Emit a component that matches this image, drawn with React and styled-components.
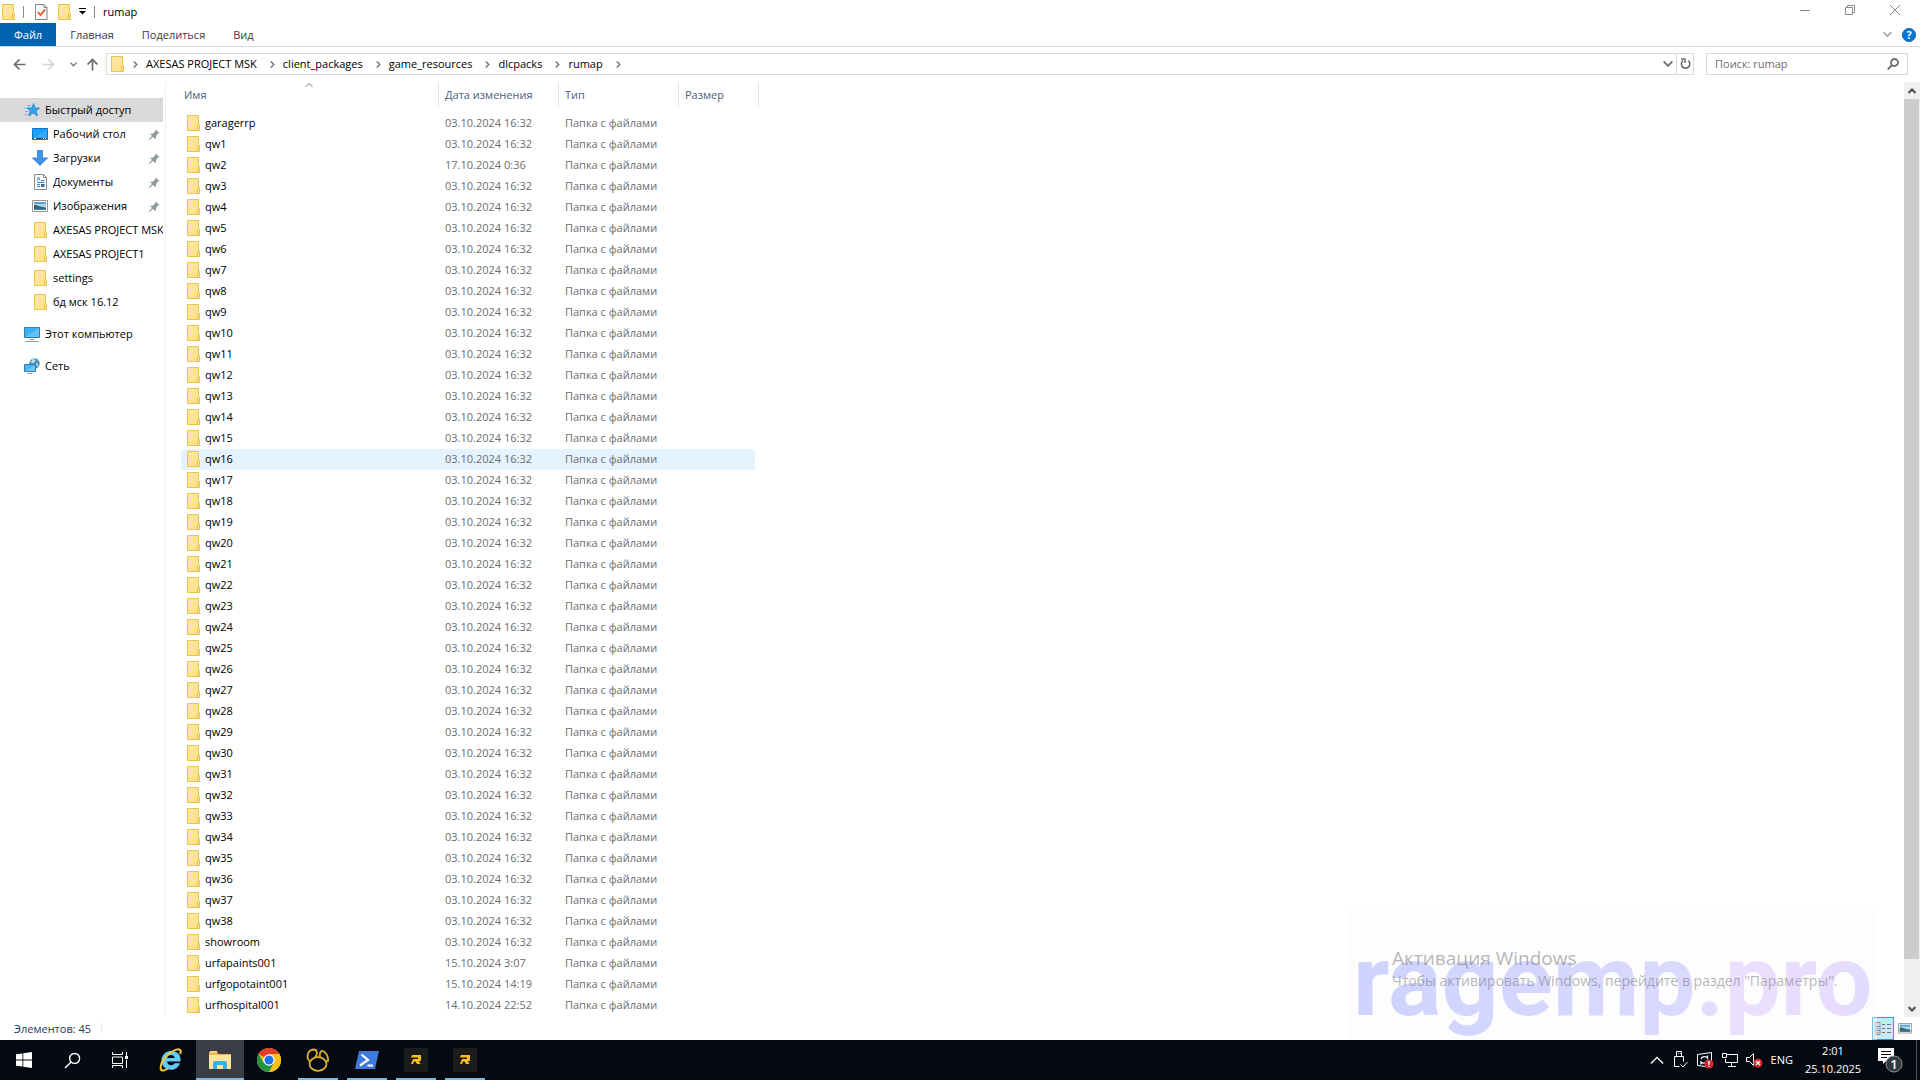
import React from "react";
import styled, { createGlobalStyle, css } from "styled-components";

const GlobalStyle = createGlobalStyle`
  *, *::before, *::after { box-sizing: border-box; }
  body { margin: 0; overflow: hidden; background: #fff; }
  body, button, input, table { font-family: "Open Sans", "Noto Sans", sans-serif; font-size: 11px; line-height: 16px; color: #000; }
  button { padding: 0; border: 0; background: none; }
  svg { display: block; flex: none; }
`;

const Desktop = styled.div`
  display: flex;
  flex-direction: column;
  height: 100vh;
`;

const TitleBar = styled.header`
  display: flex;
  justify-content: space-between;
  height: 23px;
  padding: 0 20px 0 2px;
`;

const QuickTools = styled.div`
  display: flex;
  align-items: center;
  gap: 8px;
`;

const Divider = styled.span`
  width: 1px;
  height: 12px;
  background: #8a8a8a;
`;

const ToolButton = styled.button`
  display: flex;
  align-items: center;
  justify-content: center;
  width: ${(p) => p.$width || 13}px;
  height: 20px;
`;

const Title = styled.h1`
  margin: 0;
  font-size: 11px;
  font-weight: 400;
`;

const WindowButtons = styled.div`
  display: flex;
  align-items: center;
  gap: 35px;
  height: 20px;
`;

const Ribbon = styled.nav`
  display: flex;
  height: 24px;
  padding-right: 4px;
  border-bottom: 1px solid #dadbdc;
`;

const Tab = styled.button`
  height: 23px;
  padding: 0 14px;
  color: ${(p) => (p.$active ? "#fff" : "#3b3b3b")};
  background: ${(p) => (p.$active ? "#0063b1" : "transparent")};
`;

const RibbonTools = styled.div`
  display: flex;
  align-items: center;
  gap: 10px;
  margin-left: auto;
`;

const AddressRow = styled.div`
  display: flex;
  align-items: center;
  gap: 12px;
  padding: 6px 12px 7px;
`;

const NavButtons = styled.div`
  display: flex;
  align-items: center;
  gap: 9px;
`;

const frame = css`
  display: flex;
  align-items: center;
  height: 22px;
  border: 1px solid #d9d9d9;
`;

const AddressBox = styled.div`
  ${frame}
  flex: 1;
  padding-left: 4px;
  margin-left: -5px;
`;

const Crumb = styled.button`
  display: flex;
  align-items: center;
  gap: 12px;
  padding-left: ${(p) => (p.$root ? 8 : 7)}px;
  white-space: nowrap;
`;

const AddressTools = styled.div`
  display: flex;
  align-items: center;
  gap: 3px;
  margin-left: auto;
`;

const Refresh = styled.button`
  display: flex;
  align-items: center;
  justify-content: center;
  width: 17px;
  height: 20px;
  border-left: 1px solid #d9d9d9;
`;

const SearchBox = styled.label`
  ${frame}
  width: 202px;
  padding: 0 8px;
`;

const SearchInput = styled.input`
  flex: 1;
  min-width: 0;
  padding: 0;
  border: 0;
  outline: 0;
  background: none;
  &::placeholder { color: #6d6d6d; opacity: 1; }
`;

const Body = styled.div`
  display: flex;
  flex: 1;
  min-height: 0;
`;

const Sidebar = styled.nav`
  width: 166px;
  padding: 16px 2px 0 0;
  border-right: 1px solid #f3f3f3;
`;

const SideLink = styled.a`
  display: flex;
  align-items: center;
  gap: 5px;
  height: 24px;
  padding-left: ${(p) => (p.$top ? 24 : 32)}px;
  margin-top: ${(p) => (p.$spaced ? 8 : 0)}px;
  color: #000;
  text-decoration: none;
  white-space: nowrap;
  overflow: hidden;
  background: ${(p) => (p.$active ? "#d9d9d9" : "transparent")};
`;

const IconCell = styled.span`
  display: flex;
  justify-content: center;
  flex: none;
  width: 16px;
`;

const PinSlot = styled.span`
  margin: 0 3px 0 auto;
`;

const Main = styled.main`
  flex: 1;
  min-width: 0;
  padding-left: 15px;
  overflow: hidden;
`;

const FileTable = styled.table`
  width: 578px;
  table-layout: fixed;
  border-collapse: separate;
  border-spacing: 0;
`;

const HeadCell = styled.th`
  width: ${(p) => p.$width}px;
  height: 25px;
  padding: 0 0 0 ${(p) => (p.$first ? 3 : 6)}px;
  border-right: 1px solid #e5e5e5;
  color: #4c607a;
  font-weight: 400;
  text-align: left;
  position: relative;
`;

const SortMark = styled.span`
  position: absolute;
  top: -1px;
  left: 50%;
  margin-left: -5px;
`;

const HeadGap = styled.tbody`
  height: 6px;
`;

const Row = styled.tr`
  height: 21px;
  background: ${(p) => (p.$hover ? "linear-gradient(#e5f3ff, #e5f3ff) 0 0 / 574px 100% no-repeat" : "transparent")};
`;

const Cell = styled.td`
  height: 21px;
  padding: 0 0 1px 6px;
  color: #6d6d6d;
  white-space: nowrap;
`;

const FileName = styled.span`
  display: flex;
  align-items: center;
  gap: 5px;
  color: #000;
`;

const ScrollTrack = styled.div`
  display: flex;
  flex-direction: column;
  align-items: center;
  width: 16px;
  background: #f0f0f0;
`;

const ScrollButton = styled.button`
  display: flex;
  align-items: center;
  justify-content: center;
  width: 15px;
  height: 17px;
`;

const ScrollRail = styled.div`
  flex: 1;
  align-self: stretch;
  padding-right: 1px;
`;

const ScrollThumb = styled.div`
  height: 95.5%;
  background: #cdcdcd;
`;

const StatusBar = styled.footer`
  display: flex;
  align-items: center;
  height: 23px;
  padding: 0 4px 0 14px;
  color: #1e395b;
`;

const StatusDivider = styled.span`
  width: 1px;
  height: 11px;
  margin-left: 10px;
  background: #e8e8e8;
`;

const ViewButtons = styled.div`
  display: flex;
  margin-left: auto;
`;

const ViewButton = styled.button`
  display: flex;
  align-items: center;
  justify-content: center;
  width: 22px;
  height: 23px;
  border: 1px solid ${(p) => (p.$active ? "#26a0da" : "transparent")};
  background: ${(p) => (p.$active ? "#cbe8f6" : "transparent")};
`;

const Taskbar = styled.nav`
  display: flex;
  height: 40px;
  flex: none;
  background: #050a12;
`;

const SystemButton = styled.button`
  display: flex;
  align-items: center;
  justify-content: center;
  width: 48px;
  height: 40px;
`;

const Apps = styled.div`
  display: flex;
  gap: 1px;
  margin-left: 3px;
`;

const AppButton = styled.button`
  position: relative;
  display: flex;
  align-items: center;
  justify-content: center;
  width: 48px;
  height: 40px;
  background: ${(p) => (p.$active ? "#3a3d43" : "transparent")};
  &::after {
    content: "";
    position: absolute;
    bottom: 0;
    left: ${(p) => (p.$active ? 0 : 4)}px;
    right: ${(p) => (p.$active ? 0 : 4)}px;
    height: 2px;
    background: ${(p) => (p.$open ? "#76b9ed" : "transparent")};
  }
`;

const Tray = styled.div`
  display: flex;
  align-items: center;
  gap: 8px;
  margin-left: auto;
  padding-right: 3px;
  color: #fff;
`;

const TrayButton = styled.button`
  display: flex;
  align-items: center;
  justify-content: center;
  min-width: 16px;
  height: 40px;
  color: #fff;
`;

const Clock = styled.time`
  display: flex;
  flex-direction: column;
  align-items: center;
  width: 64px;
  line-height: 18px;
`;

const Notifications = styled(TrayButton)`
  width: 35px;
`;

const ShowDesktop = styled.span`
  width: 1px;
  height: 40px;
  background: #4c5057;
`;

const Watermark = styled.div`
  position: absolute;
  right: 43px;
  bottom: 40px;
  width: 528px;
  height: 133px;
  background: rgba(251, 251, 253, 0.4);
  pointer-events: none;
`;

const Brand = styled.div`
  position: absolute;
  left: 4px;
  top: 18px;
  font: 700 100px/112px Roboto, sans-serif;
  color: transparent;
  background: linear-gradient(90deg, #cdd3ff, #dbd9ff 65%, #ebe0ff 72%, #e3dbff);
  background-clip: text;
  white-space: nowrap;
`;

const Activation = styled.div`
  position: absolute;
  left: 43px;
  top: 38px;
  color: rgba(110, 110, 110, 0.5);
  font-size: 14px;
  line-height: 20px;
  white-space: nowrap;
`;

const ActivationTitle = styled.div`
  font-size: 19px;
  line-height: 26px;
`;

const Folder = () => (
  <svg width="13" height="16" viewBox="0 0 13 16">
    <defs>
      <linearGradient id="folderFill" x1="0" y1="0" x2="1" y2="1">
        <stop offset="0" stopColor="#ffe9a2" />
        <stop offset="1" stopColor="#fddf84" />
      </linearGradient>
    </defs>
    <path d="M.5.5h11v9h1v6H.5z" fill="url(#folderFill)" stroke="#e9c54e" />
    <path d="M10.5 15V10.500l1-1" fill="none" stroke="#e9c54e" />
  </svg>
);

const Chevron = ({ dir = "right", color = "#777", size = 7, weight = 1.6 }) => {
  const turn = { right: 0, down: 90, up: -90 }[dir];
  return (
    <svg width={size} height={size} viewBox="0 0 8 8">
      <path d="M2 .5 5.500 4 2 7.500" transform={`rotate(${turn} 4 4)`} fill="none" stroke={color} strokeWidth={weight} />
    </svg>
  );
};

const Arrow = ({ turn = 0, color = "#6b6b6b" }) => (
  <svg width="13" height="13" viewBox="0 0 13 13">
    <path d="M12.500 6.500H1.500M6.500 1.500l-5 5 5 5" transform={`rotate(${turn} 6.500 6.500)`} fill="none" stroke={color} strokeWidth="1.7" />
  </svg>
);

const Properties = () => (
  <svg width="13" height="16" viewBox="0 0 13 16">
    <path d="M.5.5h8.500l3 3v12H.5z" fill="#fafafa" stroke="#858585" />
    <path d="M9 .5v3h3" fill="none" stroke="#858585" />
    <path d="m3 8 2.500 3L10 5.500" fill="none" stroke="#e8591c" strokeWidth="1.8" />
  </svg>
);

const Star = () => (
  <svg width="16" height="16" viewBox="0 0 16 16">
    <path d="m9.500 1.500 1.500 4.500h4.500l-3.500 3 1.500 5-4.500-3-4.200 3 1.500-5L3 6h5z" fill="#35a5ee" stroke="#1a80cd" strokeWidth=".8" />
    <path d="M3 3.500h4M.5 6H4M1 9.500h3.500M.5 12.500h3" stroke="#60b9ef" />
  </svg>
);

const DesktopIcon = () => (
  <svg width="16" height="12" viewBox="0 0 16 12">
    <path d="M.5.5h15v11H.5z" fill="#18a0fb" stroke="#0878c8" />
    <path d="M1 10 15 1v9z" fill="#3bb2ff" opacity=".6" />
    <path d="M1 10.500h14" stroke="#09568f" />
    <path d="M2 10.500h2M11 10.500h1M13 10.500h1" stroke="#fff" />
  </svg>
);

const Download = () => (
  <svg width="16" height="16" viewBox="0 0 16 16">
    <path d="M5.500.5h5V8h5L8 15.500.5 8h5z" fill="#3b96e8" stroke="#2b7fcf" strokeWidth=".8" />
  </svg>
);

const DocumentIcon = () => (
  <svg width="13" height="16" viewBox="0 0 13 16">
    <path d="M.5.5h9l3 3v12H.5z" fill="#fff" stroke="#8b8b8b" />
    <path d="M9.500.5v3h3" fill="none" stroke="#8b8b8b" />
    <path d="M3 6.500 4.500 3 6 6.500M7 6.500h3.500M3 8.500h7.500M3 10.500h3M3 12.500h3" fill="none" stroke="#3388c8" />
    <path d="M7 10h3.500v3H7z" fill="#326d9e" />
  </svg>
);

const Picture = ({ width = 16 }) => (
  <svg width={width} height={width * 0.75} viewBox="0 0 16 12">
    <path d="M.5.5h15v11H.5z" fill="#fff" stroke="#929292" />
    <path d="M2 2h12v8H2z" fill="#a9d4f6" />
    <path d="M2 2h12v2H2z" fill="#5c9ed8" />
    <path d="M2 5.500C4 4 6 7 14 7.500V10H2z" fill="#33665d" />
    <path d="M2 8.500h12V10H2z" fill="#3c78a5" />
  </svg>
);

const Pin = () => (
  <svg width="11" height="11" viewBox="0 0 11 11">
    <path d="M6.500.5 10.500 4l-1.300.4L7 7v2L6 10 1.500 5.300 2.300 4.500h1.800L6.300 2z" fill="#8b9aa5" />
    <path d="M4 7 .5 10.500" stroke="#8b9aa5" strokeWidth="1.300" />
  </svg>
);

const Computer = () => (
  <svg width="16" height="15" viewBox="0 0 16 15">
    <path d="M.5.5h15v10H.5z" fill="#39aff6" stroke="#3c7ca9" />
    <path d="M1 10 15 1v9z" fill="#8ed4fc" opacity=".5" />
    <path d="M6 12.500h4M1 14.500h14" stroke="#8ea3b2" />
  </svg>
);

const Network = () => (
  <svg width="16" height="16" viewBox="0 0 16 16">
    <circle cx="10.500" cy="5.500" r="5.200" fill="#4c91bd" />
    <path d="M8 1.500c2-1 4 0 3 2s-3 2-4 1zM12 5c2 0 3 2 1 4z" fill="#b8dbea" />
    <path d="M.5 6.500h11v7H.5z" fill="#44b5f6" stroke="#317ba8" />
    <path d="M1 13 11 7v6z" fill="#85d0fa" opacity=".6" />
    <path d="M3.500 15.500h5" stroke="#87a3b5" />
  </svg>
);

const Glass = ({ size = 12, color = "#6d6d6d", weight = 1.8 }) => (
  <svg width={size} height={size} viewBox="0 0 12 12">
    <circle cx="7.500" cy="4.500" r="3.500" fill="none" stroke={color} strokeWidth={weight} />
    <path d="M5 7 .7 11.300" stroke={color} strokeWidth={weight} />
  </svg>
);

const RefreshIcon = () => (
  <svg width="11" height="12" viewBox="0 0 11 12">
    <path d="M8.200 2.700A4.200 4.200 0 1 1 3 2.700" fill="none" stroke="#6d6d6d" strokeWidth="1.600" />
    <path d="M1 1h4v4" fill="none" stroke="#6d6d6d" strokeWidth="1.500" />
  </svg>
);

const Help = () => (
  <svg width="14" height="14" viewBox="0 0 14 14">
    <circle cx="7" cy="7" r="6.500" fill="#0078d7" stroke="#0a5da5" />
    <text x="7" y="11" fill="#fff" fontSize="11" fontWeight="700" textAnchor="middle">?</text>
  </svg>
);

const WindowsLogo = () => (
  <svg width="16" height="16" viewBox="0 0 16 16" fill="#fff">
    <path d="M0 2.300 6.500 1.400v6.200H0zM7.300 1.300 16 0v7.600H7.300zM0 8.400h6.500v6.200L0 13.700zM7.300 8.400H16V16l-8.700-1.300z" />
  </svg>
);

const TaskView = () => (
  <svg width="16" height="16" viewBox="0 0 16 16" fill="none" stroke="#fff">
    <path d="M.5 0v2.500h10V0M.5 16v-2.500h10V16M.5 5h10v6.500H.5zM14.500 0v4M14.500 8v8" />
    <path d="M13 4h3v3h-3z" fill="#fff" stroke="none" />
  </svg>
);

const Explorer9 = () => (
  <svg width="24" height="24" viewBox="0 0 24 24">
    <path d="M21.500 13.500H8c.3 4 6 5 7.500 1.700h5.500C19 21 13 23 8 21 0 17.500 1 5 10 3.300c7-1.300 12.500 3 11.500 10.200zM8.200 10h7.500C15.300 5.800 8.700 6 8.200 10z" fill="#61ccf5" />
    <path d="M21 6C23.500.5 19 0 12.500 4 4 9 .5 18 2 21.500c1 2 4 .8 7-1" fill="none" stroke="#f5c83a" strokeWidth="2" />
  </svg>
);

const FileExplorer = () => (
  <svg width="22" height="19" viewBox="0 0 22 19">
    <path d="M0 1h8l1.500 2H22v15H0z" fill="#e9b84c" />
    <path d="M1 0h7v2H1z" fill="#f6d777" />
    <path d="M0 4h22v14H0z" fill="#ffe49b" />
    <path d="M4 18v-6.500l1.500-1.500h11l1.500 1.500V18h-4v-4H8v4z" fill="#36b0e6" />
  </svg>
);

const ChromeLogo = () => (
  <svg width="24" height="24" viewBox="0 0 24 24">
    <circle cx="12" cy="12" r="12" fill="#fbc116" />
    <path d="M12 12 1.600 6A12 12 0 0 1 22.400 6H12z" fill="#e33b2e" />
    <path d="M1.600 6A12 12 0 0 0 12 24l5.200-9L12 12 6.800 15z" fill="#229342" />
    <path d="M12 6.500h10.700A12 12 0 0 1 12 24l5-9z" fill="#fbc116" />
    <circle cx="12" cy="12" r="5.700" fill="#fff" />
    <circle cx="12" cy="12" r="4.500" fill="#1a73e8" />
  </svg>
);

const Navicat = () => (
  <svg width="24" height="24" viewBox="0 0 24 24" fill="none" stroke="#dcae35" strokeWidth="1.800">
    <ellipse cx="12" cy="16" rx="8.500" ry="6.800" />
    <path d="M3.500 13C-.5 9 2 2 7.500 1.500c4 0 4.500 4.500 1.500 8M14 9.500C13 5.500 15 2 17 3c3 1.500 5.500 5.500 5 10l-2 .5" />
  </svg>
);

const PowerShell = () => (
  <svg width="24" height="20" viewBox="0 0 24 20">
    <path d="M4 1h20l-4 18H0z" fill="#3f79dc" />
    <path d="m6.500 4.500 6.500 5.500-8 5.500M12.500 15.500h5.500" fill="none" stroke="#fff" strokeWidth="2.200" />
  </svg>
);

const Rage = () => (
  <svg width="24" height="24" viewBox="0 0 24 24">
    <path d="M0 0h24v24H0z" fill="#1b1b1b" />
    <path d="M8 7h9v5.500l-2 1 1.500 2.500H13l-1.500-2.500H10L9 16H7l2-5h5V9.500H7z" fill="#fbbd23" />
  </svg>
);

const Usb = () => (
  <svg width="14" height="18" viewBox="0 0 14 18" fill="none" stroke="#fff">
    <path d="M2.500 5.500v-5h5v5M.5 5.500h9v5M.5 5.500v10h5M4 2.500h.8M6 2.500h.8M6.500 13.500l2.500 2.500 4.500-5" />
  </svg>
);

const SyncAlert = () => (
  <svg width="17" height="17" viewBox="0 0 17 17" fill="none" stroke="#fff">
    <path d="M.5 2.500 14.500.5v9M.5 2.500v11l8 1" />
    <path d="M4 7c1-3 5-3 6.500-1V3.500M10 8.500c-.5 3-4 3.500-6 1.500v2.500" strokeWidth="1.300" />
    <circle cx="12" cy="12" r="4.500" fill="#d9222a" stroke="none" />
    <path d="M12 9v3.800M12 13.700v1" strokeWidth="1.500" />
  </svg>
);

const Lan = () => (
  <svg width="16" height="14" viewBox="0 0 16 14" fill="none" stroke="#fff">
    <path d="M4 1.500h11.500v8H3.500V6M.5.5h4v4h-4zM9.500 10v3M6 13.500h8" />
  </svg>
);

const Muted = () => (
  <svg width="17" height="15" viewBox="0 0 17 15" fill="none" stroke="#fff">
    <path d="M.5 4.500h3l4-4v12l-4-4h-3z" />
    <circle cx="12" cy="10" r="4.500" fill="#d9222a" stroke="none" />
    <path d="m10 8 4 4m0-4-4 4" strokeWidth="1.200" />
  </svg>
);

const NoticeIcon = () => (
  <svg width="25" height="25" viewBox="0 0 25 25">
    <path d="M0 0h16v13H8l-3 3v-3H0z" fill="#fff" />
    <path d="M3 3.500h10M3 6.500h10M3 9.500h6" stroke="#050a12" />
    <circle cx="16" cy="16" r="8" fill="#35393e" stroke="#8b8e92" />
    <text x="16" y="21" fill="#fff" fontSize="13" fontWeight="600" textAnchor="middle">1</text>
  </svg>
);

const DetailsIcon = () => (
  <svg width="16" height="14" viewBox="0 0 16 14" fill="none">
    <path d="M1 .5h4v12H1zM1 4.500h4M1 8.500h4" stroke="#8d8d8d" />
    <path d="M7 2.500h3M12 2.500h4M7 6.500h3M12 6.500h4M7 10.500h3M12 10.500h4" stroke="#777" />
    <path d="M2.500 6.500h1" stroke="#2a86d0" />
    <path d="M2.500 10.500h1" stroke="#d33" />
  </svg>
);

const crumbs = ["AXESAS PROJECT MSK", "client_packages", "game_resources", "dlcpacks", "rumap"];

const places = [
  { name: "Быстрый доступ", icon: Star, top: true, active: true },
  { name: "Рабочий стол", icon: DesktopIcon, pinned: true },
  { name: "Загрузки", icon: Download, pinned: true },
  { name: "Документы", icon: DocumentIcon, pinned: true },
  { name: "Изображения", icon: Picture, pinned: true },
  { name: "AXESAS PROJECT MSK", icon: Folder },
  { name: "AXESAS PROJECT1", icon: Folder },
  { name: "settings", icon: Folder },
  { name: "бд мск 16.12", icon: Folder },
  { name: "Этот компьютер", icon: Computer, top: true, spaced: true },
  { name: "Сеть", icon: Network, top: true, spaced: true },
];

const usual = "03.10.2024 16:32";
const files = [
  ["garagerrp", usual],
  ...Array.from({ length: 38 }, (_, i) => [`qw${i + 1}`, i === 1 ? "17.10.2024 0:36" : usual]),
  ["showroom", usual],
  ["urfapaints001", "15.10.2024 3:07"],
  ["urfgopotaint001", "15.10.2024 14:19"],
  ["urfhospital001", "14.10.2024 22:52"],
];

const apps = [
  { name: "Internet Explorer", icon: Explorer9 },
  { name: "Проводник", icon: FileExplorer, active: true, open: true },
  { name: "Google Chrome", icon: ChromeLogo },
  { name: "Navicat", icon: Navicat, open: true },
  { name: "PowerShell", icon: PowerShell, open: true },
  { name: "RAGE", icon: Rage, open: true },
  { name: "RAGE 2", icon: Rage, open: true },
];

export default function App() {
  return (
    <Desktop>
      <GlobalStyle />
      <TitleBar>
        <QuickTools>
          <Folder />
          <Divider />
          <ToolButton aria-label="Свойства" $width={18}><Properties /></ToolButton>
          <ToolButton aria-label="Новая папка"><Folder /></ToolButton>
          <ToolButton aria-label="Настройка панели" $width={7}>
            <svg width="7" height="7" viewBox="0 0 7 7"><path d="M0 .5h7" stroke="#000" /><path d="M0 3h7L3.500 6.500z" /></svg>
          </ToolButton>
          <Divider />
          <Title>rumap</Title>
        </QuickTools>
        <WindowButtons>
          <ToolButton aria-label="Свернуть" $width={10}>
            <svg width="10" height="10" stroke="#8a8a8a"><path d="M0 5.500h10" /></svg>
          </ToolButton>
          <ToolButton aria-label="Восстановить" $width={10}>
            <svg width="10" height="10" fill="none" stroke="#8a8a8a"><path d="M.5 2.500h7v7h-7zM2.500 2.500v-2h7v7h-2" /></svg>
          </ToolButton>
          <ToolButton aria-label="Закрыть" $width={10}>
            <svg width="10" height="10" stroke="#8a8a8a"><path d="m0 0 10 10M10 0 0 10" /></svg>
          </ToolButton>
        </WindowButtons>
      </TitleBar>

      <Ribbon>
        <Tab $active>Файл</Tab>
        <Tab>Главная</Tab>
        <Tab>Поделиться</Tab>
        <Tab>Вид</Tab>
        <RibbonTools>
          <ToolButton aria-label="Развернуть ленту" $width={9}><Chevron dir="down" size={9} color="#999" weight={1.2} /></ToolButton>
          <ToolButton aria-label="Справка" $width={14}><Help /></ToolButton>
        </RibbonTools>
      </Ribbon>

      <AddressRow>
        <NavButtons>
          <ToolButton aria-label="Назад" $width={15}><Arrow /></ToolButton>
          <ToolButton aria-label="Вперёд" $width={25}><Arrow turn={180} color="#d4d4d4" /></ToolButton>
          <ToolButton aria-label="Последние места" $width={7}><Chevron dir="down" /></ToolButton>
          <ToolButton aria-label="Вверх"><Arrow turn={90} /></ToolButton>
        </NavButtons>
        <AddressBox>
          <Folder />
          <Crumb aria-label="Корень" $root><Chevron /></Crumb>
          {crumbs.map((name) => (
            <Crumb key={name}>{name}<Chevron /></Crumb>
          ))}
          <AddressTools>
            <ToolButton aria-label="Журнал адресов" $width={10}><Chevron dir="down" size={10} /></ToolButton>
            <Refresh aria-label="Обновить"><RefreshIcon /></Refresh>
          </AddressTools>
        </AddressBox>
        <SearchBox>
          <SearchInput aria-label="Поиск" placeholder="Поиск: rumap" />
          <Glass />
        </SearchBox>
      </AddressRow>

      <Body>
        <Sidebar>
          {places.map(({ name, icon: Icon, top, active, spaced, pinned }) => (
            <SideLink href="#" key={name} $top={top} $active={active} $spaced={spaced}>
              <IconCell><Icon /></IconCell>
              {name}
              {pinned && <PinSlot><Pin /></PinSlot>}
            </SideLink>
          ))}
        </Sidebar>
        <Main>
          <FileTable>
            <thead>
              <tr>
                <HeadCell $width={258} $first>
                  Имя
                  <SortMark><Chevron dir="up" size={8} weight={1} /></SortMark>
                </HeadCell>
                <HeadCell $width={120}>Дата изменения</HeadCell>
                <HeadCell $width={120}>Тип</HeadCell>
                <HeadCell $width={80}>Размер</HeadCell>
              </tr>
            </thead>
            <HeadGap><tr><td colSpan={4} /></tr></HeadGap>
            <tbody>
              {files.map(([name, date]) => (
                <Row key={name} $hover={name === "qw16"}>
                  <Cell><FileName><Folder />{name}</FileName></Cell>
                  <Cell>{date}</Cell>
                  <Cell>Папка с файлами</Cell>
                  <Cell />
                </Row>
              ))}
            </tbody>
          </FileTable>
        </Main>
        <ScrollTrack>
          <ScrollButton aria-label="Прокрутить вверх"><Chevron dir="up" size={8} color="#505050" weight={2} /></ScrollButton>
          <ScrollRail><ScrollThumb /></ScrollRail>
          <ScrollButton aria-label="Прокрутить вниз"><Chevron dir="down" size={8} color="#505050" weight={2} /></ScrollButton>
        </ScrollTrack>
      </Body>

      <StatusBar>
        <span>Элементов: 45</span>
        <StatusDivider />
        <ViewButtons>
          <ViewButton aria-label="Таблица" $active><DetailsIcon /></ViewButton>
          <ViewButton aria-label="Крупные значки"><Picture width={14} /></ViewButton>
        </ViewButtons>
      </StatusBar>

      <Watermark>
        <Brand>ragemp.pro</Brand>
        <Activation>
          <ActivationTitle>Активация Windows</ActivationTitle>
          Чтобы активировать Windows, перейдите в раздел "Параметры".
        </Activation>
      </Watermark>

      <Taskbar>
        <SystemButton aria-label="Пуск"><WindowsLogo /></SystemButton>
        <SystemButton aria-label="Найти"><Glass size={17} color="#fff" weight={1} /></SystemButton>
        <SystemButton aria-label="Представление задач"><TaskView /></SystemButton>
        <Apps>
          {apps.map(({ name, icon: Icon, active, open }) => (
            <AppButton key={name} aria-label={name} $active={active} $open={open}><Icon /></AppButton>
          ))}
        </Apps>
        <Tray>
          <TrayButton aria-label="Скрытые значки"><Chevron dir="up" size={14} color="#fff" weight={0.8} /></TrayButton>
          <TrayButton aria-label="USB"><Usb /></TrayButton>
          <TrayButton aria-label="Обновления"><SyncAlert /></TrayButton>
          <TrayButton aria-label="Сеть"><Lan /></TrayButton>
          <TrayButton aria-label="Громкость"><Muted /></TrayButton>
          <TrayButton>ENG</TrayButton>
          <Clock><span>2:01</span><span>25.10.2025</span></Clock>
          <Notifications aria-label="Уведомления"><NoticeIcon /></Notifications>
          <ShowDesktop />
        </Tray>
      </Taskbar>
    </Desktop>
  );
}
